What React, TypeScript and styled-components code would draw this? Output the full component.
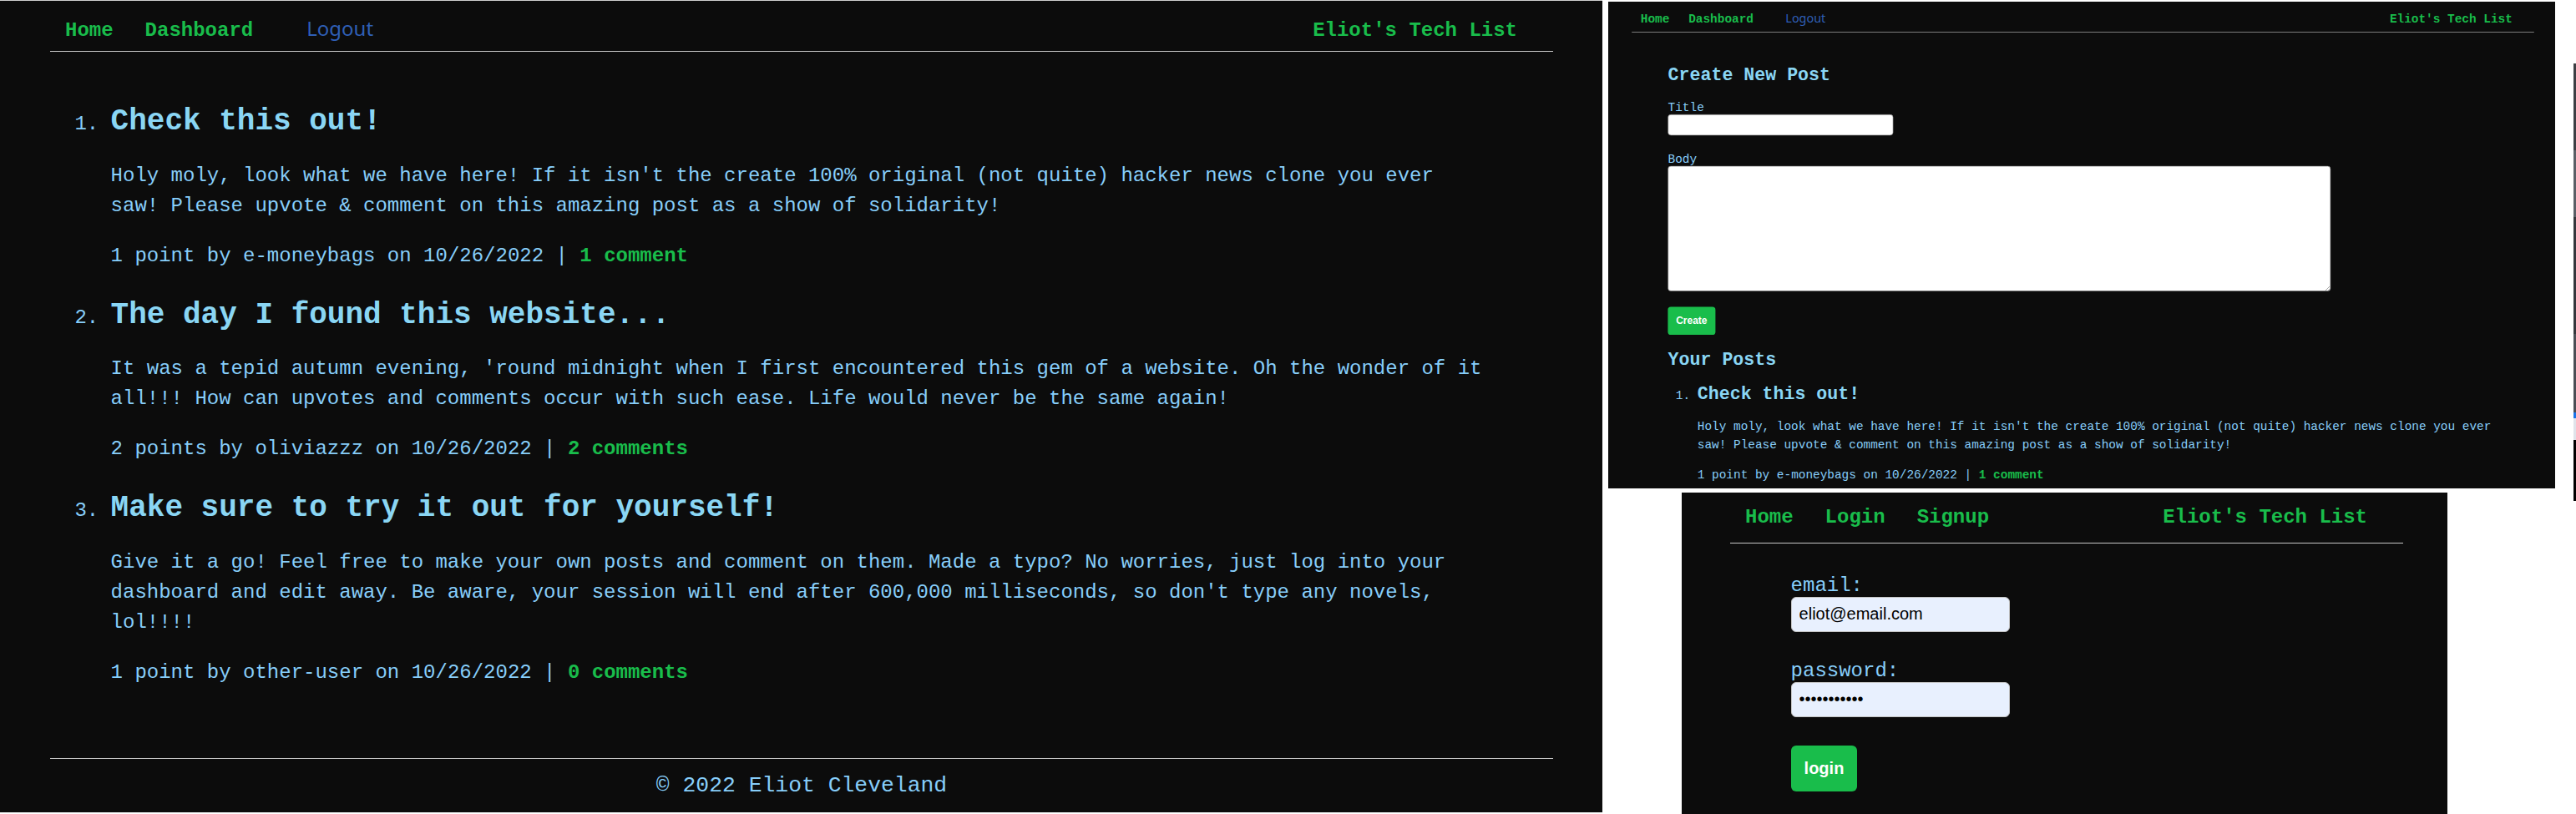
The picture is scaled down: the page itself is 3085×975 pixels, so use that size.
import React from "react";
import styled, { createGlobalStyle } from "styled-components";

const GREEN = "#19bd4b";
const SKY = "#87cefa";
const TITLE_SKY = "#8ad6f4";
const BG = "#0c0c0c";
const RULE = "#c8c8c8";
const MONO = `"Liberation Mono", "Courier New", monospace`;
const SANS = `"Liberation Sans", Arial, sans-serif`;
const UI = `"Noto Sans", "Open Sans", Arial, sans-serif`;

const GlobalStyle = createGlobalStyle`
  html, body {
    margin: 0;
    padding: 0;
    background: #ffffff;
  }
  body {
    width: 3085px;
    height: 975px;
    overflow: hidden;
  }
`;

const Composite = styled.div`
  display: flex;
  align-items: flex-start;
  width: 3085px;
  height: 975px;
  background: #ffffff;
  overflow: hidden;
`;

const Screen = styled.div`
  background: ${BG};
  color: ${SKY};
  font-family: ${MONO};
  font-size: 24px;
  overflow: hidden;
  box-sizing: border-box;
  flex: none;
`;

const HomeScreen = styled(Screen)`
  width: 1919px;
  height: 973px;
  border-top: 1px solid #cfcfcf;
`;

const PanelGap = styled.div<{ $w: number }>`
  flex: none;
  width: ${(p) => p.$w}px;
`;

const RightColumn = styled.div`
  display: flex;
  flex-direction: column;
  width: 1134px;
  flex: none;
`;

const ThumbFrame = styled.div`
  margin-top: 2px;
  width: 1134px;
  height: 583px;
  overflow: hidden;
  background: ${BG};
`;

const ThumbPage = styled(Screen)`
  width: 1890px;
  height: 972px;
  transform: scale(0.6);
  transform-origin: 0 0;
`;

const LoginScreen = styled(Screen)`
  margin-top: 5px;
  margin-left: 88px;
  width: 917px;
  height: 385px;
`;

const EdgeStrip = styled.div`
  flex: none;
  width: 3px;
  height: 600px;
  background: linear-gradient(
    to bottom,
    #ffffff 0 76px,
    #3c3f44 76px 180px,
    #5a5f66 180px 260px,
    #34373c 260px 400px,
    #4a4e55 400px 494px,
    #1a73e8 494px 501px,
    #dfe3ea 501px 527px,
    #000000 527px 600px
  );
`;

const Container = styled.div<{ $left: number; $width: number }>`
  margin-left: ${(p) => p.$left}px;
  width: ${(p) => p.$width}px;
`;

const NavBar = styled.nav`
  display: flex;
  align-items: baseline;
  justify-content: space-between;
  height: 61px;
  box-sizing: border-box;
  padding: 16px 43px 0 18px;
  border-bottom: 1px solid ${RULE};
`;

const NavLinks = styled.div`
  display: flex;
  align-items: baseline;
  gap: 38px;
`;

const NavLink = styled.a`
  color: ${GREEN};
  font-family: ${MONO};
  font-weight: bold;
  font-size: 24px;
  text-decoration: none;
`;

const LogoutButton = styled.button`
  margin-left: 26px;
  padding: 0;
  border: 0;
  background: none;
  color: #2f5fb6;
  font-family: ${UI};
  font-size: 24px;
  line-height: normal;
  cursor: pointer;
`;

const Brand = styled.span`
  color: ${GREEN};
  font-weight: bold;
  font-size: 24px;
`;

const Main = styled.main`
  padding: 0 78px 0 72.6px;
`;

const PostList = styled.ol<{ $top: number; $indent: number }>`
  margin: ${(p) => p.$top}px 0 0;
  padding: 0 0 0 ${(p) => p.$indent}px;
  list-style: decimal outside;
`;

const PostItem = styled.li`
  font-size: 24px;
  & + & {
    margin-top: 26px;
  }
`;

const PostTitle = styled.h2`
  margin: 0;
  color: ${TITLE_SKY};
  font-size: 36px;
  line-height: 54px;
  font-weight: bold;
`;

const PostBody = styled.p`
  margin: 19.5px 0 0;
  line-height: 36px;
`;

const PostMeta = styled.p`
  margin: 24px 0 0;
  line-height: 36px;
`;

const CommentLink = styled.a`
  color: ${GREEN};
  font-weight: bold;
  text-decoration: none;
`;

const Footer = styled.footer`
  margin-top: 84px;
  border-top: 1px solid ${RULE};
  padding-top: 17.4px;
  text-align: center;
  font-size: 26.4px;
`;

const SectionTitle = styled.h2<{ $top: number }>`
  margin: ${(p) => p.$top}px 0 0;
  color: ${TITLE_SKY};
  font-size: 36px;
  line-height: 54px;
  font-weight: bold;
`;

const Form = styled.form`
  display: flex;
  flex-direction: column;
  align-items: flex-start;
`;

const FieldLabel = styled.label<{ $top: number }>`
  display: block;
  margin-top: ${(p) => p.$top}px;
  font-size: 24px;
  line-height: normal;
`;

const TextInput = styled.input`
  display: block;
  box-sizing: border-box;
  width: 450px;
  height: 42px;
  margin: 0;
  border: 1px solid #767676;
  border-radius: 6px;
  background: #ffffff;
`;

const TextArea = styled.textarea`
  display: block;
  box-sizing: border-box;
  width: 1323px;
  height: 250px;
  margin: 0;
  border: 1px solid #767676;
  border-radius: 6px;
  background: #ffffff;
`;

const AuthInput = styled.input`
  display: block;
  box-sizing: border-box;
  width: 262px;
  height: 42px;
  margin: 0;
  padding: 0 9px;
  border: 1px solid #c4c4c4;
  border-radius: 6px;
  background: #e8f0fe;
  color: #000000;
  font-family: ${SANS};
  font-size: 20px;
`;

const GreenButton = styled.button<{ $top: number; $h: number }>`
  display: block;
  margin-top: ${(p) => p.$top}px;
  height: ${(p) => p.$h}px;
  padding: 0 16px;
  border: 0;
  border-radius: 6px;
  background: ${GREEN};
  color: #ffffff;
  font-family: ${SANS};
  font-weight: bold;
  font-size: 20px;
  cursor: pointer;
`;

type Post = {
  title: string;
  body: string;
  points: number;
  author: string;
  date: string;
  comments: number;
};

const posts: Post[] = [
  {
    title: "Check this out!",
    body:
      "Holy moly, look what we have here! If it isn't the create 100% original (not quite) hacker news clone you ever saw! Please upvote & comment on this amazing post as a show of solidarity!",
    points: 1,
    author: "e-moneybags",
    date: "10/26/2022",
    comments: 1,
  },
  {
    title: "The day I found this website...",
    body:
      "It was a tepid autumn evening, 'round midnight when I first encountered this gem of a website. Oh the wonder of it all!!! How can upvotes and comments occur with such ease. Life would never be the same again!",
    points: 2,
    author: "oliviazzz",
    date: "10/26/2022",
    comments: 2,
  },
  {
    title: "Make sure to try it out for yourself!",
    body:
      "Give it a go! Feel free to make your own posts and comment on them. Made a typo? No worries, just log into your dashboard and edit away. Be aware, your session will end after 600,000 milliseconds, so don't type any novels, lol!!!!",
    points: 1,
    author: "other-user",
    date: "10/26/2022",
    comments: 0,
  },
];

const plural = (n: number, word: string) => `${n} ${word}${n === 1 ? "" : "s"}`;

const PostEntry: React.FC<{ post: Post }> = ({ post }) => (
  <PostItem>
    <PostTitle>{post.title}</PostTitle>
    <PostBody>{post.body}</PostBody>
    <PostMeta>
      {plural(post.points, "point")} by {post.author} on {post.date} |{" "}
      <CommentLink href="#">{plural(post.comments, "comment")}</CommentLink>
    </PostMeta>
  </PostItem>
);

const Nav: React.FC<{ loggedIn: boolean }> = ({ loggedIn }) => (
  <NavBar>
    <NavLinks>
      <NavLink href="#">Home</NavLink>
      {loggedIn ? (
        <>
          <NavLink href="#">Dashboard</NavLink>
          <LogoutButton type="button">Logout</LogoutButton>
        </>
      ) : (
        <>
          <NavLink href="#">Login</NavLink>
          <NavLink href="#">Signup</NavLink>
        </>
      )}
    </NavLinks>
    <Brand>Eliot's Tech List</Brand>
  </NavBar>
);

const HomePage: React.FC = () => (
  <HomeScreen>
    <Container $left={60} $width={1800}>
      <Nav loggedIn />
      <Main>
        <PostList $top={57} $indent={0}>
          {posts.map((p) => (
            <PostEntry key={p.title} post={p} />
          ))}
        </PostList>
      </Main>
      <Footer>© 2022 Eliot Cleveland</Footer>
    </Container>
  </HomeScreen>
);

const DashboardPage: React.FC = () => (
  <ThumbFrame>
    <ThumbPage>
      <Container $left={46.7} $width={1801}>
        <Nav loggedIn />
        <Main>
          <SectionTitle $top={60.4}>Create New Post</SectionTitle>
          <Form onSubmit={(e) => e.preventDefault()}>
            <FieldLabel $top={22.6} htmlFor="post-title">
              Title
            </FieldLabel>
            <TextInput id="post-title" type="text" />
            <FieldLabel $top={34.5} htmlFor="post-body">
              Body
            </FieldLabel>
            <TextArea id="post-body" />
            <GreenButton $top={31} $h={56} type="submit">
              Create
            </GreenButton>
          </Form>
          <SectionTitle $top={24}>Your Posts</SectionTitle>
          <PostList $top={14.4} $indent={58.7}>
            <PostEntry post={posts[0]} />
          </PostList>
        </Main>
      </Container>
    </ThumbPage>
  </ThumbFrame>
);

const LoginPage: React.FC = () => (
  <LoginScreen>
    <Container $left={58} $width={806}>
      <Nav loggedIn={false} />
      <Main>
        <Form onSubmit={(e) => e.preventDefault()}>
          <FieldLabel $top={36.7} htmlFor="email">
            email:
          </FieldLabel>
          <AuthInput id="email" type="email" defaultValue="eliot@email.com" readOnly />
          <FieldLabel $top={33.1} htmlFor="password">
            password:
          </FieldLabel>
          <AuthInput id="password" type="password" defaultValue="password123" readOnly />
          <GreenButton $top={34} $h={55} type="submit">
            login
          </GreenButton>
        </Form>
      </Main>
    </Container>
  </LoginScreen>
);

export default function App() {
  return (
    <>
      <GlobalStyle />
      <Composite>
        <HomePage />
        <PanelGap $w={7} />
        <RightColumn>
          <DashboardPage />
          <LoginPage />
        </RightColumn>
        <PanelGap $w={22} />
        <EdgeStrip />
      </Composite>
    </>
  );
}
